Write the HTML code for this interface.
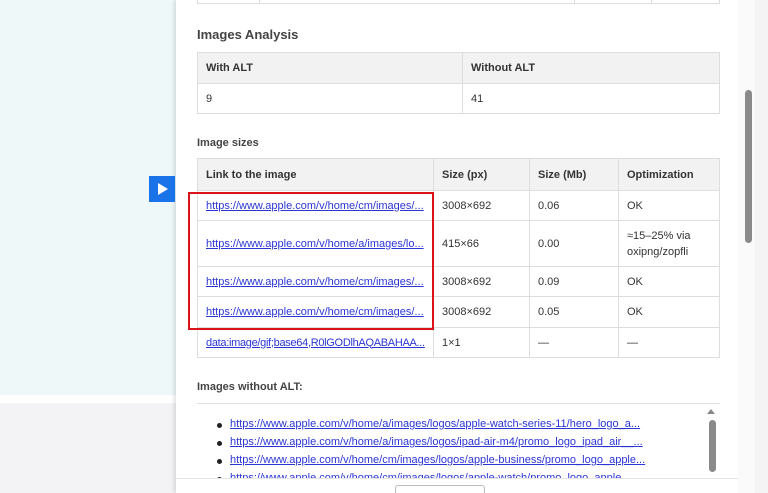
<!DOCTYPE html>
<html><head><style>
*{box-sizing:border-box;margin:0;padding:0}
html,body{width:768px;height:493px;overflow:hidden}
body{position:relative;font-family:"Liberation Sans",Arial,sans-serif;font-size:11px;color:#333;background:#f3f3f5}
.bgtop{position:absolute;left:0;top:0;width:176px;height:395px;background:#eef8f8}
.bgw{position:absolute;left:0;top:395px;width:176px;height:8px;background:#fff}
.right{position:absolute;left:755px;top:0;width:13px;height:493px;background:#f4f4f4}
.panel{position:absolute;left:176px;top:0;width:562px;height:493px;background:#fff;box-shadow:-2px 0 4px rgba(0,0,0,.12)}
.track{position:absolute;left:738px;top:0;width:17px;height:493px;background:#fafafa}
.thumb{position:absolute;left:745px;top:90px;width:7px;height:153px;background:#8a8a8a;border-radius:4px}
.play{position:absolute;left:149px;top:176px;width:26px;height:26px;background:#1a73e8}
.play:after{content:"";position:absolute;left:9px;top:7px;border-left:10px solid #fff;border-top:6px solid transparent;border-bottom:6px solid transparent}
table{position:absolute;border-collapse:collapse;font-size:11px;table-layout:fixed}
td,th{border:1px solid #ddd;padding:0 8px;text-align:left;vertical-align:middle;overflow:hidden}
td.l{white-space:nowrap}
th{background:#f2f2f2;font-weight:bold;color:#333}
a{color:#2b35d6;text-decoration:underline}
h3{position:absolute;font-size:13px;font-weight:bold;color:#444}
h4{position:absolute;font-size:11px;font-weight:bold;color:#444}
.red{position:absolute;left:188px;top:192px;width:246px;height:138px;border:2px solid #d9131a}
.list{position:absolute;left:197px;top:403px;width:523px;height:75px;border-top:1px solid #ddd;overflow:hidden}
.list div{position:absolute;left:33px;white-space:nowrap}
.list div:before{content:"";position:absolute;left:-13px;top:5px;width:5px;height:5px;border-radius:50%;background:#222}
.foot{position:absolute;left:176px;top:478px;width:562px;height:15px;background:#fff;border-top:1px solid #e5e5e5;overflow:hidden}
.btn{position:absolute;left:219px;top:6px;width:90px;height:14px;border:1px solid #bbb;border-radius:3px;background:#fff}
</style></head><body>
<div class="bgtop"></div><div class="bgw"></div><div class="right"></div>
<div class="panel"></div>
<div class="track"></div><div class="thumb"></div>
<div class="play"></div>
<table style="left:197px;top:-28px;width:523px"><tr style="height:31px"><td style="width:62px"></td><td style="width:315px"></td><td style="width:77px"></td><td></td></tr></table>
<h3 style="left:197px;top:27px">Images Analysis</h3>
<table style="left:197px;top:52px;width:523px">
<tr style="height:31px"><th style="width:265px">With ALT</th><th>Without ALT</th></tr>
<tr style="height:30px"><td>9</td><td>41</td></tr></table>
<h4 style="left:197px;top:137px">Image sizes</h4>
<table style="left:197px;top:158px;width:523px">
<tr style="height:32px"><th style="width:236px">Link to the image</th><th style="width:96px">Size (px)</th><th style="width:89px">Size (Mb)</th><th>Optimization</th></tr>
<tr style="height:30px"><td class="l"><a>https://www.apple.com/v/home/cm/images/...</a></td><td>3008×692</td><td>0.06</td><td>OK</td></tr>
<tr style="height:46px"><td class="l"><a>https://www.apple.com/v/home/a/images/lo...</a></td><td>415×66</td><td>0.00</td><td style="line-height:16px">≈15–25% via oxipng/zopfli</td></tr>
<tr style="height:30px"><td class="l"><a>https://www.apple.com/v/home/cm/images/...</a></td><td>3008×692</td><td>0.09</td><td>OK</td></tr>
<tr style="height:31px"><td class="l"><a>https://www.apple.com/v/home/cm/images/...</a></td><td>3008×692</td><td>0.05</td><td>OK</td></tr>
<tr style="height:30px"><td class="l" style="letter-spacing:-0.3px"><a>data:image/gif;base64,R0lGODlhAQABAHAA...</a></td><td>1×1</td><td>—</td><td>—</td></tr>
</table>
<div class="red"></div>
<h4 style="left:197px;top:381px">Images without ALT:</h4>
<div class="list">
<div style="top:14px"><a>https://www.apple.com/v/home/a/images/logos/apple-watch-series-11/hero_logo_a...</a></div>
<div style="top:32px"><a>https://www.apple.com/v/home/a/images/logos/ipad-air-m4/promo_logo_ipad_air__...</a></div>
<div style="top:50px"><a>https://www.apple.com/v/home/cm/images/logos/apple-business/promo_logo_apple...</a></div>
<div style="top:68px"><a>https://www.apple.com/v/home/cm/images/logos/apple-watch/promo_logo_apple...</a></div>
<span style="position:absolute;left:510px;top:5px;border-bottom:5px solid #888;border-left:4px solid transparent;border-right:4px solid transparent"></span>
<span style="position:absolute;left:512px;top:16px;width:7px;height:52px;background:#8a8a8a;border-radius:4px"></span>
</div>
<div class="foot"><div class="btn"></div></div>
</body></html>
